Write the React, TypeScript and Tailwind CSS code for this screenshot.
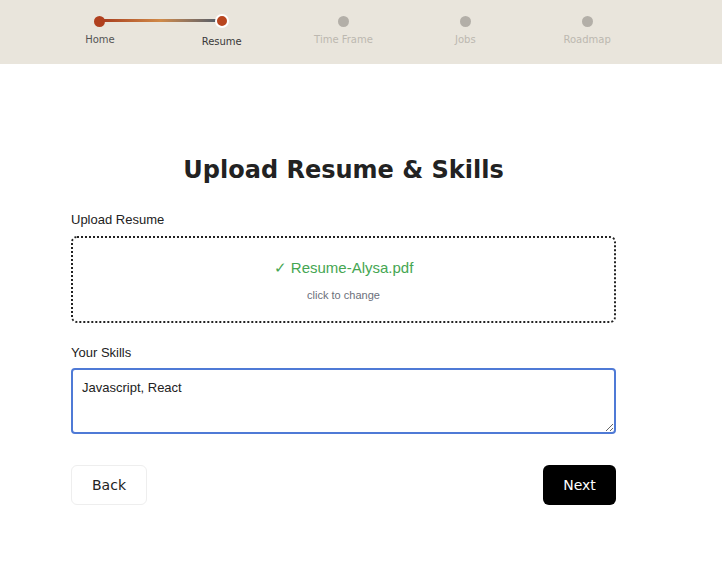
import React from "react";

const steps = [
  { label: "Home", state: "done" },
  { label: "Resume", state: "active" },
  { label: "Time Frame", state: "todo" },
  { label: "Jobs", state: "todo" },
  { label: "Roadmap", state: "todo" },
];

export default function App() {
  return (
    <div className="min-h-[573px] w-full bg-white" style={{ fontFamily: '"Liberation Sans", Arial, sans-serif' }}>
      <div className="h-[64px] w-full bg-[#e9e5dc]">
        <div className="relative ml-[39px] flex w-[609px] pt-[15px]">
          <div className="absolute left-[61px] top-[19px] h-[3px] w-[121px] bg-gradient-to-r from-[#a63a1e] via-[#d08a48] via-50% to-[#4d5a68]" />
          {steps.map((s) => (
            <div key={s.label} className="relative flex flex-1 flex-col items-center">
              <div className="flex h-[12px] items-center justify-center">
                {s.state === "done" && <div className="h-[11px] w-[11px] rounded-full bg-[#b0401e]" />}
                {s.state === "active" && (
                  <div className="h-[14px] w-[14px] rounded-full border-2 border-white bg-[#b9461f]" />
                )}
                {s.state === "todo" && <div className="h-[11px] w-[11px] rounded-full bg-[#b3afa8]" />}
              </div>
              <div
                className={
                  s.state === "active"
                    ? "mt-[7px] text-[10px] text-[#3a3a3a]"
                    : s.state === "done"
                    ? "mt-[5px] text-[10px] text-[#555]"
                    : "mt-[5px] text-[10px] text-[#bcb8b0]"
                }
                style={{ fontFamily: '"DejaVu Sans", sans-serif' }}
              >
                {s.label}
              </div>
            </div>
          ))}
        </div>
      </div>

      <div className="ml-[71px] w-[545px] pt-[90px]">
        <h1
          className="text-center text-[24px] font-bold leading-[32px] text-[#222]"
          style={{ fontFamily: '"DejaVu Sans", sans-serif' }}
        >
          Upload Resume &amp; Skills
        </h1>

        <div className="mt-[24px] text-[13px] text-[#222]">Upload Resume</div>
        <div className="mt-[6px] flex h-[87px] flex-col items-center justify-center rounded-[6px] border-2 border-dotted border-[#222]">
          <div className="mt-[2px] text-[15px] text-[#45a652]">✓ Resume-Alysa.pdf</div>
          <div className="mt-[8px] text-[11px] text-[#6b6f7a]">click to change</div>
        </div>

        <div className="mt-[20px] text-[13px] text-[#222]">Your Skills</div>
        <textarea
          className="mt-[6px] block h-[66px] w-full rounded-[4px] border-2 border-[#4f7ad6] px-[9px] py-[8px] text-[13px] text-[#222] outline-none"
          defaultValue="Javascript, React"
        />

        <div className="mt-[31px] flex items-center justify-between">
          <button
            className="h-[40px] w-[76px] rounded-[6px] border border-[#eeeeee] bg-white text-[14px] text-[#222]"
            style={{ fontFamily: '"DejaVu Sans", sans-serif' }}
          >
            Back
          </button>
          <button
            className="h-[40px] w-[73px] rounded-[6px] bg-black text-[14px] text-white"
            style={{ fontFamily: '"DejaVu Sans", sans-serif' }}
          >
            Next
          </button>
        </div>
      </div>
    </div>
  );
}
